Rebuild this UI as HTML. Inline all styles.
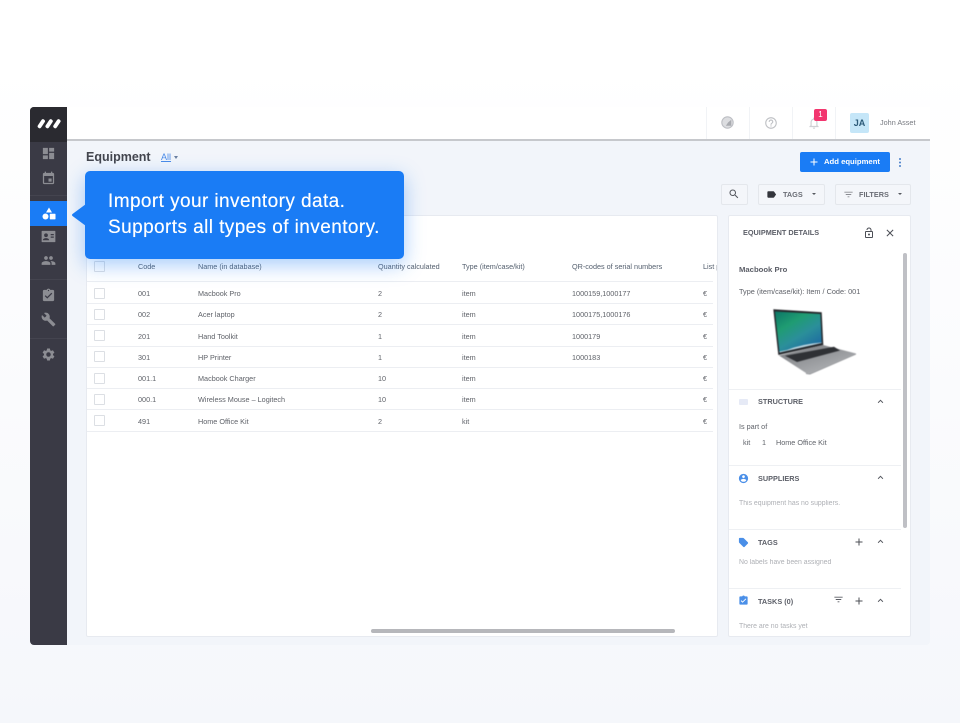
<!DOCTYPE html>
<html><head><meta charset="utf-8"><style>
html,body{margin:0;padding:0}
body{width:960px;height:723px;overflow:hidden;position:relative;background:linear-gradient(180deg,#fff 0,#fff 60px,#f8f9fc 560px,#f5f7fb 723px);font-family:"Liberation Sans",sans-serif;color:#5a5d66}
body>*{filter:blur(.3px)}
.a{position:absolute}
.t{position:absolute;white-space:nowrap;font-size:7.25px;line-height:10px;color:#5f6269}
.g{color:#aeb0b5;font-size:6.9px}
svg{position:absolute;display:block}
.b{position:absolute;background:#fff;border:1px solid #e7eaf0;box-sizing:border-box;border-radius:2px}
.cb{position:absolute;left:94px;width:9px;height:9px;border:1px solid #dcdfe4;border-radius:1px;background:#fff}
.l{position:absolute;left:87px;width:626px;height:1px;background:#eceef2}
.d{position:absolute;left:729px;width:172px;height:1px;background:#eef0f3}
.h{position:absolute;white-space:nowrap;font-size:7.3px;line-height:10px;font-weight:bold;color:#5c5f68}
</style></head><body>
<div class="a" style="left:30px;top:107px;width:900px;height:538px;background:#f2f5fa;border-radius:4px;overflow:hidden"></div>
<!-- header -->
<div class="a" style="left:67px;top:107px;width:863px;height:32px;background:#fff;border-bottom:2px solid #c6c8cc;box-sizing:content-box"></div>
<div class="a" style="left:706px;top:107px;width:1px;height:32px;background:#f1f3f6"></div>
<div class="a" style="left:749px;top:107px;width:1px;height:32px;background:#f1f3f6"></div>
<div class="a" style="left:792px;top:107px;width:1px;height:32px;background:#f1f3f6"></div>
<div class="a" style="left:835px;top:107px;width:1px;height:32px;background:#f1f3f6"></div>
<svg style="left:721px;top:116px" width="13" height="13" viewBox="0 0 24 24"><circle cx="12" cy="12" r="10.500" fill="#dcdde0" stroke="#bdbfc4" stroke-width="2"/><path d="M13 12L19 7V18H9z" fill="#a9abb0"/></svg>
<svg style="left:764px;top:116px" width="14" height="14" viewBox="0 0 24 24"><path fill="#c0c2c6" d="M11 18h2v-2h-2v2zm1-16C6.480 2 2 6.480 2 12s4.480 10 10 10 10-4.480 10-10S17.520 2 12 2zm0 18c-4.410 0-8-3.590-8-8s3.590-8 8-8 8 3.590 8 8-3.590 8-8 8zm0-14c-2.210 0-4 1.790-4 4h2c0-1.100.9-2 2-2s2 .9 2 2c0 2-3 1.750-3 5h2c0-2.250 3-2.500 3-5 0-2.210-1.790-4-4-4z"/></svg>
<svg style="left:807px;top:116px" width="14" height="14" viewBox="0 0 24 24"><path fill="#cfd0d4" d="M12 22c1.100 0 2-.9 2-2h-4c0 1.100.9 2 2 2zm6-6v-5c0-3.070-1.630-5.640-4.500-6.320V4c0-.83-.67-1.500-1.500-1.500s-1.500.67-1.500 1.500v.68C7.640 5.360 6 7.920 6 11v5l-2 2v1h16v-1l-2-2zm-2 1H8v-6c0-2.480 1.510-4.500 4-4.500s4 2.020 4 4.500v6z"/></svg>
<div class="a" style="left:814px;top:109px;width:13px;height:12px;background:#f2366f;border-radius:2px;color:#fff;font-size:8px;line-height:12px;text-align:center">1</div>
<div class="a" style="left:850px;top:113px;width:19px;height:20px;background:#c5e6f8;border-radius:2px;color:#2c5a78;font-size:9px;font-weight:bold;line-height:20px;text-align:center">JA</div>
<div class="t" style="left:880px;top:118px;color:#777a80">John Asset</div>
<!-- sidebar -->
<div class="a" style="left:30px;top:107px;width:37px;height:538px;background:#3a3a45;border-radius:4px 0 0 4px"></div>
<div class="a" style="left:30px;top:107px;width:37px;height:35px;background:#2a2a30;border-radius:4px 0 0 0"></div>
<svg style="left:36px;top:118px" width="25" height="12" viewBox="0 0 25 12"><path stroke="#fff" stroke-width="3.900" stroke-linecap="round" d="M7 3.200L3.600 8.300M14.800 3.200L11.400 8.300M22.600 3.200L19.200 8.300"/></svg>
<div class="a" style="left:30px;top:195px;width:37px;height:1px;background:#44444f"></div>
<div class="a" style="left:30px;top:279px;width:37px;height:1px;background:#44444f"></div>
<div class="a" style="left:30px;top:338px;width:37px;height:1px;background:#44444f"></div>
<div class="a" style="left:30px;top:201px;width:37px;height:25px;background:#1a7cf5"></div>
<svg style="left:41px;top:146px" width="15" height="15" viewBox="0 0 24 24"><path fill="#8c8d93" d="M3 13h8V3H3v10zm0 8h8v-6H3v6zm10 0h8V11h-8v10zm0-18v6h8V3h-8z"/></svg>
<svg style="left:41px;top:171px" width="15" height="15" viewBox="0 0 24 24"><path fill="#8c8d93" d="M17 12h-5v5h5v-5zM16 1v2H8V1H6v2H5c-1.110 0-1.990.9-1.990 2L3 19c0 1.100.89 2 2 2h14c1.100 0 2-.9 2-2V5c0-1.100-.9-2-2-2h-1V1h-2zm3 18H5V8h14v11z"/></svg>
<svg style="left:42px;top:207px" width="14" height="13" viewBox="0 0 14 13"><path fill="#fff" d="M7 .5L10 5.500H4z"/><circle cx="3.500" cy="9.500" r="3" fill="#fff"/><rect x="7.800" y="6.700" width="5.700" height="5.700" rx=".6" fill="#fff"/></svg>
<svg style="left:41px;top:229px" width="15" height="15" viewBox="0 0 24 24"><path fill="#8c8d93" d="M2 3h20c.6 0 1 .5 1 1v16c0 .6-.4 1-1 1H2c-.6 0-1-.4-1-1V4c0-.5.4-1 1-1z"/><circle cx="8" cy="10" r="3" fill="#3a3a45"/><path fill="#3a3a45" d="M3 18c0-2.500 3-3.500 5-3.500s5 1 5 3.500zM15.500 8h5v2h-5zM15.500 12h5v2h-5z"/></svg>
<svg style="left:41px;top:253px" width="15" height="15" viewBox="0 0 24 24"><path fill="#8c8d93" d="M16 11c1.660 0 2.990-1.340 2.990-3S17.660 5 16 5c-1.660 0-3 1.340-3 3s1.340 3 3 3zm-8 0c1.660 0 2.990-1.340 2.990-3S9.660 5 8 5C6.340 5 5 6.340 5 8s1.340 3 3 3zm0 2c-2.330 0-7 1.170-7 3.500V19h14v-2.500c0-2.330-4.670-3.500-7-3.500zm8 0c-.29 0-.62.02-.97.05 1.160.84 1.970 1.970 1.970 3.450V19h6v-2.500c0-2.330-4.670-3.500-7-3.500z"/></svg>
<svg style="left:41px;top:288px" width="15" height="15" viewBox="0 0 24 24"><path fill="#8c8d93" d="M19 3h-4.180C14.400 1.840 13.300 1 12 1c-1.300 0-2.400.84-2.820 2H5c-1.100 0-2 .9-2 2v14c0 1.100.9 2 2 2h14c1.100 0 2-.9 2-2V5c0-1.100-.9-2-2-2zm-7 0c.55 0 1 .45 1 1s-.45 1-1 1-1-.45-1-1 .45-1 1-1zm-2 14l-4-4 1.410-1.410L10 14.170l6.590-6.590L18 9l-8 8z"/></svg>
<svg style="left:41px;top:312px" width="15" height="15" viewBox="0 0 24 24"><path fill="#8c8d93" d="M22.700 19l-9.100-9.100c.9-2.300.4-5-1.500-6.900-2-2-5-2.400-7.400-1.300L9 6 6 9 1.600 4.700C.4 7.100.9 10.100 2.900 12.100c1.900 1.900 4.600 2.400 6.900 1.500l9.100 9.100c.4.4 1 .4 1.400 0l2.300-2.300c.5-.4.5-1.100.1-1.400z"/></svg>
<svg style="left:41px;top:347px" width="15" height="15" viewBox="0 0 24 24"><path fill="#8c8d93" d="M19.140 12.940c.04-.3.06-.61.06-.94 0-.32-.02-.64-.07-.94l2.030-1.580a.49.49 0 0 0 .12-.61l-1.920-3.320a.488.488 0 0 0-.59-.22l-2.390.96c-.5-.38-1.030-.7-1.620-.94l-.36-2.540a.484.484 0 0 0-.48-.41h-3.840c-.24 0-.43.17-.47.41l-.36 2.540c-.59.24-1.130.57-1.620.94l-2.390-.96c-.22-.08-.47 0-.59.22L2.740 8.870c-.12.21-.08.47.12.61l2.030 1.580c-.05.3-.09.63-.09.94s.02.64.07.94l-2.030 1.580a.49.49 0 0 0-.12.61l1.920 3.320c.12.22.37.29.59.22l2.390-.96c.5.38 1.030.7 1.620.94l.36 2.540c.05.24.24.41.48.41h3.840c.24 0 .44-.17.47-.41l.36-2.540c.59-.24 1.130-.56 1.620-.94l2.390.96c.22.08.47 0 .59-.22l1.920-3.320c.12-.22.07-.47-.12-.61l-2.010-1.580zM12 15.600c-1.980 0-3.600-1.620-3.600-3.600s1.620-3.600 3.600-3.600 3.600 1.620 3.600 3.600-1.620 3.600-3.600 3.600z"/></svg>
<!-- title row -->
<div class="a" style="left:86px;top:149px;font-size:12.5px;line-height:16px;font-weight:bold;color:#44464e;white-space:nowrap">Equipment</div>
<div class="a" style="left:161px;top:152px;font-size:9px;line-height:11px;color:#4a8be8;text-decoration:underline;white-space:nowrap">All</div>
<div class="a" style="left:174px;top:156px;width:0;height:0;border:2px solid transparent;border-top:3px solid #6a7fa0"></div>
<div class="a" style="left:800px;top:152px;width:90px;height:20px;background:#1a7cf5;border-radius:2px"></div>
<svg style="left:808px;top:156px" width="12" height="12" viewBox="0 0 24 24"><path fill="#fff" d="M19 13h-6v6h-2v-6H5v-2h6V5h2v6h6v2z"/></svg>
<div class="a" style="left:824px;top:157px;font-size:7.700px;line-height:10px;font-weight:bold;color:#fff;white-space:nowrap">Add equipment</div>
<svg style="left:897px;top:157px" width="6" height="11" viewBox="0 0 6 11"><circle cx="3" cy="2" r="1" fill="#4a7fc9"/><circle cx="3" cy="5.500" r="1" fill="#4a7fc9"/><circle cx="3" cy="9" r="1" fill="#4a7fc9"/></svg>
<!-- filter buttons -->
<div class="a" style="left:721px;top:184px;width:27px;height:21px;background:#f4f6fa;border:1px solid #e4e7ec;box-sizing:border-box;border-radius:2px"></div>
<svg style="left:728px;top:188px" width="12" height="12" viewBox="0 0 24 24"><path fill="#55585f" d="M15.500 14h-.79l-.28-.27C15.410 12.590 16 11.110 16 9.500 16 5.910 13.090 3 9.500 3S3 5.910 3 9.500 5.910 16 9.500 16c1.610 0 3.090-.59 4.230-1.570l.27.28v.79l5 4.990L20.490 19l-4.990-5zm-6 0C7.010 14 5 11.990 5 9.500S7.010 5 9.500 5 14 7.010 14 9.500 11.990 14 9.500 14z"/></svg>
<div class="a" style="left:758px;top:184px;width:67px;height:21px;background:#f4f6fa;border:1px solid #e4e7ec;box-sizing:border-box;border-radius:2px"></div>
<svg style="left:766px;top:189px" width="11" height="11" viewBox="0 0 24 24"><path fill="#33353c" d="M17.630 5.840C17.270 5.330 16.670 5 16 5L5 5.010C3.900 5.010 3 5.900 3 7v10c0 1.100.9 1.990 2 1.990L16 19c.67 0 1.270-.33 1.630-.84L22 12l-4.370-6.160z"/></svg>
<div class="h" style="left:783px;top:190px;color:#6a6d75">TAGS</div>
<div class="a" style="left:812px;top:193px;width:0;height:0;border:2px solid transparent;border-top:2.500px solid #55585f"></div>
<div class="a" style="left:835px;top:184px;width:76px;height:21px;background:#f4f6fa;border:1px solid #e4e7ec;box-sizing:border-box;border-radius:2px"></div>
<svg style="left:843px;top:189px" width="11" height="11" viewBox="0 0 24 24"><path fill="#8a8c92" d="M10 18h4v-2h-4v2zM3 6v2h18V6H3zm3 7h12v-2H6v2z"/></svg>
<div class="h" style="left:859px;top:190px;color:#6a6d75">FILTERS</div>
<div class="a" style="left:898px;top:193px;width:0;height:0;border:2px solid transparent;border-top:2.500px solid #55585f"></div>
<!-- table -->
<div class="b" style="left:86px;top:215px;width:632px;height:422px"></div>
<div class="l" style="top:281px"></div>
<div class="l" style="top:303px"></div><div class="l" style="top:324px"></div><div class="l" style="top:346px"></div><div class="l" style="top:367px"></div><div class="l" style="top:388px"></div><div class="l" style="top:409px"></div><div class="l" style="top:431px"></div>
<div class="cb" style="top:261px"></div>
<div class="cb" style="top:288px"></div><div class="cb" style="top:309px"></div><div class="cb" style="top:330px"></div><div class="cb" style="top:351px"></div><div class="cb" style="top:373px"></div><div class="cb" style="top:394px"></div><div class="cb" style="top:415px"></div>
<div class="t" style="left:138px;top:262px;color:#55606f">Code</div><div class="t" style="left:198px;top:262px;color:#55606f">Name (in database)</div><div class="t" style="left:378px;top:262px;color:#55606f">Quantity calculated</div><div class="t" style="left:462px;top:262px;color:#55606f">Type (item/case/kit)</div><div class="t" style="left:572px;top:262px;color:#55606f">QR-codes of serial numbers</div><div class="t" style="left:703px;top:262px;width:14px;overflow:hidden;color:#55606f">List price</div>
<div class="t" style="left:138px;top:289px">001</div><div class="t" style="left:198px;top:289px">Macbook Pro</div><div class="t" style="left:378px;top:289px">2</div><div class="t" style="left:462px;top:289px">item</div><div class="t" style="left:572px;top:289px">1000159,1000177</div><div class="t" style="left:703px;top:289px">€</div>
<div class="t" style="left:138px;top:310px">002</div><div class="t" style="left:198px;top:310px">Acer laptop</div><div class="t" style="left:378px;top:310px">2</div><div class="t" style="left:462px;top:310px">item</div><div class="t" style="left:572px;top:310px">1000175,1000176</div><div class="t" style="left:703px;top:310px">€</div>
<div class="t" style="left:138px;top:332px">201</div><div class="t" style="left:198px;top:332px">Hand Toolkit</div><div class="t" style="left:378px;top:332px">1</div><div class="t" style="left:462px;top:332px">item</div><div class="t" style="left:572px;top:332px">1000179</div><div class="t" style="left:703px;top:332px">€</div>
<div class="t" style="left:138px;top:353px">301</div><div class="t" style="left:198px;top:353px">HP Printer</div><div class="t" style="left:378px;top:353px">1</div><div class="t" style="left:462px;top:353px">item</div><div class="t" style="left:572px;top:353px">1000183</div><div class="t" style="left:703px;top:353px">€</div>
<div class="t" style="left:138px;top:374px">001.1</div><div class="t" style="left:198px;top:374px">Macbook Charger</div><div class="t" style="left:378px;top:374px">10</div><div class="t" style="left:462px;top:374px">item</div><div class="t" style="left:703px;top:374px">€</div>
<div class="t" style="left:138px;top:395px">000.1</div><div class="t" style="left:198px;top:395px">Wireless Mouse – Logitech</div><div class="t" style="left:378px;top:395px">10</div><div class="t" style="left:462px;top:395px">item</div><div class="t" style="left:703px;top:395px">€</div>
<div class="t" style="left:138px;top:417px">491</div><div class="t" style="left:198px;top:417px">Home Office Kit</div><div class="t" style="left:378px;top:417px">2</div><div class="t" style="left:462px;top:417px">kit</div><div class="t" style="left:703px;top:417px">€</div>
<div class="a" style="left:371px;top:629px;width:304px;height:4px;background:#b6b7bb;border-radius:2px"></div>
<!-- details -->
<div class="b" style="left:728px;top:215px;width:183px;height:422px"></div>
<div class="h" style="left:743px;top:228px">EQUIPMENT DETAILS</div>
<svg style="left:863px;top:227px" width="12" height="12" viewBox="0 0 24 24"><path fill="#4c4f56" d="M12 17c1.100 0 2-.9 2-2s-.9-2-2-2-2 .9-2 2 .9 2 2 2zm6-9h-1V6c0-2.760-2.240-5-5-5S7 3.240 7 6h1.900c0-1.710 1.390-3.100 3.100-3.100s3.100 1.390 3.100 3.100v2H6c-1.100 0-2 .9-2 2v10c0 1.100.9 2 2 2h12c1.100 0 2-.9 2-2V10c0-1.100-.9-2-2-2zm0 12H6V10h12v10z"/></svg>
<svg style="left:884px;top:227px" width="12" height="12" viewBox="0 0 24 24"><path fill="#4c4f56" d="M19 6.410L17.590 5 12 10.590 6.410 5 5 6.410 10.590 12 5 17.590 6.410 19 12 13.410 17.590 19 19 17.590 13.410 12z"/></svg>
<div class="a" style="left:903px;top:253px;width:4px;height:275px;background:#bfc0c5;border-radius:2px"></div>
<div class="h" style="left:739px;top:265px;font-size:7.700px">Macbook Pro</div>
<div class="t" style="left:739px;top:287px;font-size:7.300px">Type (item/case/kit): Item / Code: 001</div>
<!-- laptop -->
<svg style="left:760px;top:300px;filter:blur(.45px)" width="110" height="85" viewBox="0 0 110 85">
<defs><linearGradient id="sc" x1="0" y1="0" x2=".7" y2="1"><stop offset="0" stop-color="#0c7666"/><stop offset=".35" stop-color="#1f9c72"/><stop offset=".65" stop-color="#2b8f9a"/><stop offset="1" stop-color="#1d6aa2"/></linearGradient><linearGradient id="bs" x1="0" y1="0" x2=".8" y2="1"><stop offset="0" stop-color="#77797d"/><stop offset="1" stop-color="#b4b6b9"/></linearGradient></defs>
<path fill="#26282c" d="M13.300 9.300L61.700 12.300L63.300 45L18.300 55z"/>
<path fill="url(#sc)" d="M15 11.500L60.300 14L61.700 43L19.500 52.500z"/>
<path fill="#bcd6e0" d="M27 50Q42 44 61.600 42.500V43L19.500 52.500L19.400 51.500z"/>
<path fill="url(#bs)" d="M19 55.500L63 45L96 53.500L50 73.500L46 73z"/>
<path fill="#2f3135" d="M25 55.800L74 46.700L80 50.500L37 62z"/>
<path fill="#8f9195" d="M96 53.500L96 54.500L50 74.500L46 74L46 73L50 73.500z"/>
</svg>
<div class="d" style="top:389px"></div>
<svg style="left:738px;top:397px" width="11" height="10" viewBox="0 0 11 10"><rect x="1" y="2" width="9" height="6" rx="1" fill="#e6eaf6"/></svg>
<div class="h" style="left:758px;top:397px">STRUCTURE</div>
<svg style="left:875px;top:396px" width="11" height="11" viewBox="0 0 24 24"><path fill="#55585f" d="M12 8l-6 6 1.410 1.410L12 10.830l4.590 4.580L18 14z"/></svg>
<div class="t" style="left:739px;top:422px">Is part of</div>
<div class="t" style="left:743px;top:438px">kit</div><div class="t" style="left:762px;top:438px">1</div><div class="t" style="left:776px;top:438px">Home Office Kit</div>
<div class="d" style="top:465px"></div>
<svg style="left:738px;top:473px" width="11" height="11" viewBox="0 0 24 24"><path fill="#4a8fe8" d="M12 2C6.480 2 2 6.480 2 12s4.480 10 10 10 10-4.480 10-10S17.520 2 12 2zm0 3c1.660 0 3 1.340 3 3s-1.340 3-3 3-3-1.340-3-3 1.340-3 3-3zm0 14.200c-2.500 0-4.710-1.280-6-3.220.03-1.990 4-3.080 6-3.080 1.990 0 5.970 1.090 6 3.080-1.290 1.940-3.500 3.220-6 3.220z"/></svg>
<div class="h" style="left:758px;top:474px">SUPPLIERS</div>
<svg style="left:875px;top:472px" width="11" height="11" viewBox="0 0 24 24"><path fill="#55585f" d="M12 8l-6 6 1.410 1.410L12 10.830l4.590 4.580L18 14z"/></svg>
<div class="t g" style="left:739px;top:499px">This equipment has no suppliers.</div>
<div class="d" style="top:529px"></div>
<svg style="left:738px;top:537px" width="11" height="11" viewBox="0 0 24 24"><path fill="#4a8fe8" d="M21.410 11.580l-9-9C12.050 2.220 11.550 2 11 2H4c-1.100 0-2 .9-2 2v7c0 .55.22 1.050.59 1.420l9 9c.36.36.86.58 1.410.58.55 0 1.050-.22 1.410-.59l7-7c.37-.36.59-.86.59-1.410 0-.55-.23-1.060-.59-1.420z"/></svg>
<div class="h" style="left:758px;top:538px">TAGS</div>
<svg style="left:853px;top:536px" width="12" height="12" viewBox="0 0 24 24"><path fill="#4c4f56" d="M19 13h-6v6h-2v-6H5v-2h6V5h2v6h6v2z"/></svg>
<svg style="left:875px;top:536px" width="11" height="11" viewBox="0 0 24 24"><path fill="#55585f" d="M12 8l-6 6 1.410 1.410L12 10.830l4.590 4.580L18 14z"/></svg>
<div class="t g" style="left:739px;top:558px">No labels have been assigned</div>
<div class="d" style="top:588px"></div>
<svg style="left:738px;top:595px" width="11" height="11" viewBox="0 0 24 24"><path fill="#4a8fe8" d="M19 3h-4.180C14.400 1.840 13.300 1 12 1c-1.300 0-2.400.84-2.820 2H5c-1.100 0-2 .9-2 2v14c0 1.100.9 2 2 2h14c1.100 0 2-.9 2-2V5c0-1.100-.9-2-2-2zm-9 14l-4-4 1.410-1.410L10 14.170l6.590-6.590L18 9l-8 8z"/></svg>
<div class="h" style="left:758px;top:597px">TASKS (0)</div>
<svg style="left:833px;top:594px" width="11" height="11" viewBox="0 0 24 24"><path fill="#5a5d64" d="M10 18h4v-2h-4v2zM3 6v2h18V6H3zm3 7h12v-2H6v2z"/></svg>
<svg style="left:853px;top:595px" width="12" height="12" viewBox="0 0 24 24"><path fill="#4c4f56" d="M19 13h-6v6h-2v-6H5v-2h6V5h2v6h6v2z"/></svg>
<svg style="left:875px;top:595px" width="11" height="11" viewBox="0 0 24 24"><path fill="#55585f" d="M12 8l-6 6 1.410 1.410L12 10.830l4.590 4.580L18 14z"/></svg>
<div class="t g" style="left:739px;top:622px">There are no tasks yet</div>
<!-- tooltip -->
<div class="a" style="left:85px;top:171px;width:319px;height:88px;background:#1a7cf5;border-radius:5px;box-shadow:0 6px 20px rgba(26,124,245,.38)"></div>
<svg style="left:71px;top:204px" width="15" height="22" viewBox="0 0 15 22"><path fill="#1a7cf5" d="M15 0L1.500 10Q.5 11 1.500 12L15 22z"/></svg>
<div class="a" style="left:108px;top:189px;font-size:19px;line-height:26px;color:#fff;white-space:nowrap;letter-spacing:.42px;text-shadow:0 0 .4px #fff">Import your inventory data.<br>Supports all types of inventory.</div>
</body></html>
